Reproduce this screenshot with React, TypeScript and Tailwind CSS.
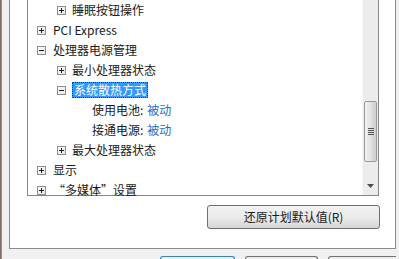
import React from "react";

type Row = {
  level: number;
  label: string;
  box?: "plus" | "minus";
  value?: string;
  selected?: boolean;
};

const rows: Row[] = [
  { level: 2, label: "睡眠按钮操作", box: "plus" },
  { level: 1, label: "PCI Express", box: "plus" },
  { level: 1, label: "处理器电源管理", box: "minus" },
  { level: 2, label: "最小处理器状态", box: "plus" },
  { level: 2, label: "系统散热方式", box: "minus", selected: true },
  { level: 3, label: "使用电池:", value: "被动" },
  { level: 3, label: "接通电源:", value: "被动" },
  { level: 2, label: "最大处理器状态", box: "plus" },
  { level: 1, label: "显示", box: "plus" },
  { level: 1, label: "“多媒体”设置", box: "plus" },
];

const ExpandBox = ({ kind }: { kind: "plus" | "minus" }) => (
  <svg width="9" height="9" viewBox="0 0 9 9" className="shrink-0">
    <defs>
      <linearGradient id={`g-${kind}`} x1="0" y1="0" x2="1" y2="1">
        <stop offset="0" stopColor="#ffffff" />
        <stop offset="1" stopColor="#e4e4e4" />
      </linearGradient>
    </defs>
    <rect x="0.5" y="0.5" width="8" height="8" fill={`url(#g-${kind})`} stroke="#8e8f8f" />
    <line x1="2" y1="4.5" x2="7" y2="4.5" stroke="#1e1e1e" />
    {kind === "plus" && <line x1="4.5" y1="2" x2="4.5" y2="7" stroke="#1e1e1e" />}
  </svg>
);

const indent: Record<number, string> = {
  1: "pl-[9px]",
  2: "pl-[29px]",
  3: "pl-[64px]",
};

const TreeRow = ({ row }: { row: Row }) => (
  <div className={`flex h-[20px] items-center ${indent[row.level]}`}>
    {row.box && <ExpandBox kind={row.box} />}
    {row.box && <div className={row.level === 1 ? "w-[7px]" : "w-[6px]"} />}
    {row.selected ? (
      <span className="h-[16px] px-[1px] leading-[14px] bg-[#3399ff] text-white border border-dotted border-[#1a3f70]">
        {row.label}
      </span>
    ) : (
      <span className="leading-[20px] text-[#1a1a1a]">{row.label}</span>
    )}
    {row.value && (
      <span className="ml-[4px] leading-[20px] text-[#1f6dc4]">{row.value}</span>
    )}
  </div>
);

const Scrollbar = () => (
  <div className="flex h-full w-[16px] shrink-0 flex-col bg-[#ececec] border-l border-[#f7f7f7]">
    <div className="h-[101px]" />
    <div className="mx-[1px] flex h-[61px] items-center justify-center rounded-[2px] border border-[#9a9a9a] bg-gradient-to-r from-[#f2f2f2] via-[#e2e2e2] to-[#cfcfcf]">
      <div className="flex flex-col gap-[1px]">
        <div className="h-px w-[6px] bg-[#555]" />
        <div className="h-px w-[6px] bg-[#555]" />
        <div className="h-px w-[6px] bg-[#555]" />
        <div className="h-px w-[6px] bg-[#555]" />
      </div>
    </div>
    <div className="flex flex-1 items-end justify-center pb-[7px]">
      <svg width="7" height="4" viewBox="0 0 7 4">
        <path d="M0 0 H7 L3.5 4 Z" fill="#4d4d4d" />
      </svg>
    </div>
  </div>
);

export default function App() {
  return (
    <div
      className="flex h-[259px] w-[399px] overflow-hidden bg-[#f0f0f0] text-[12px]"
      style={{ fontFamily: '"Noto Sans CJK SC", "Noto Sans", sans-serif' }}
    >
      <div className="w-[2px] shrink-0 bg-gradient-to-r from-[#6f5f58] to-[#a99e98]" />
      <div className="flex min-w-0 flex-1 flex-col pl-[7px] pr-[3px]">
        {/* white settings panel */}
        <div className="flex h-[250px] flex-col border-x border-b border-[#898c95] bg-white pl-[17px] pr-[16px]">
          <div className="flex h-[196px] border-x border-b border-[#828790]">
            <div className="min-w-0 flex-1">
              {rows.map((row, i) => (
                <TreeRow key={i} row={row} />
              ))}
            </div>
            <Scrollbar />
          </div>
          <div className="mt-[9px] flex justify-end">
            <button className="mr-[-1px] h-[24px] w-[173px] rounded-[3px] border border-[#707070] bg-gradient-to-b from-[#f2f2f2] via-[#ebebeb] to-[#d6d6d6] text-[12px] text-[#1a1a1a]">
              还原计划默认值(R)
            </button>
          </div>
        </div>
        {/* dialog buttons peeking at the bottom */}
        <div className="mt-[7px] flex gap-[10px] overflow-hidden pl-[151px]">
          <div className="h-[3px] w-[75px] shrink-0 rounded-t-[3px] border-x border-t border-[#3c7fb1] bg-[#e5f1fb]" />
          <div className="h-[3px] w-[73px] shrink-0 rounded-t-[3px] border-x border-t border-[#707070] bg-[#eeeeee]" />
          <div className="h-[3px] w-[73px] shrink-0 rounded-t-[3px] border-x border-t border-[#707070] bg-[#eeeeee]" />
        </div>
      </div>
    </div>
  );
}
